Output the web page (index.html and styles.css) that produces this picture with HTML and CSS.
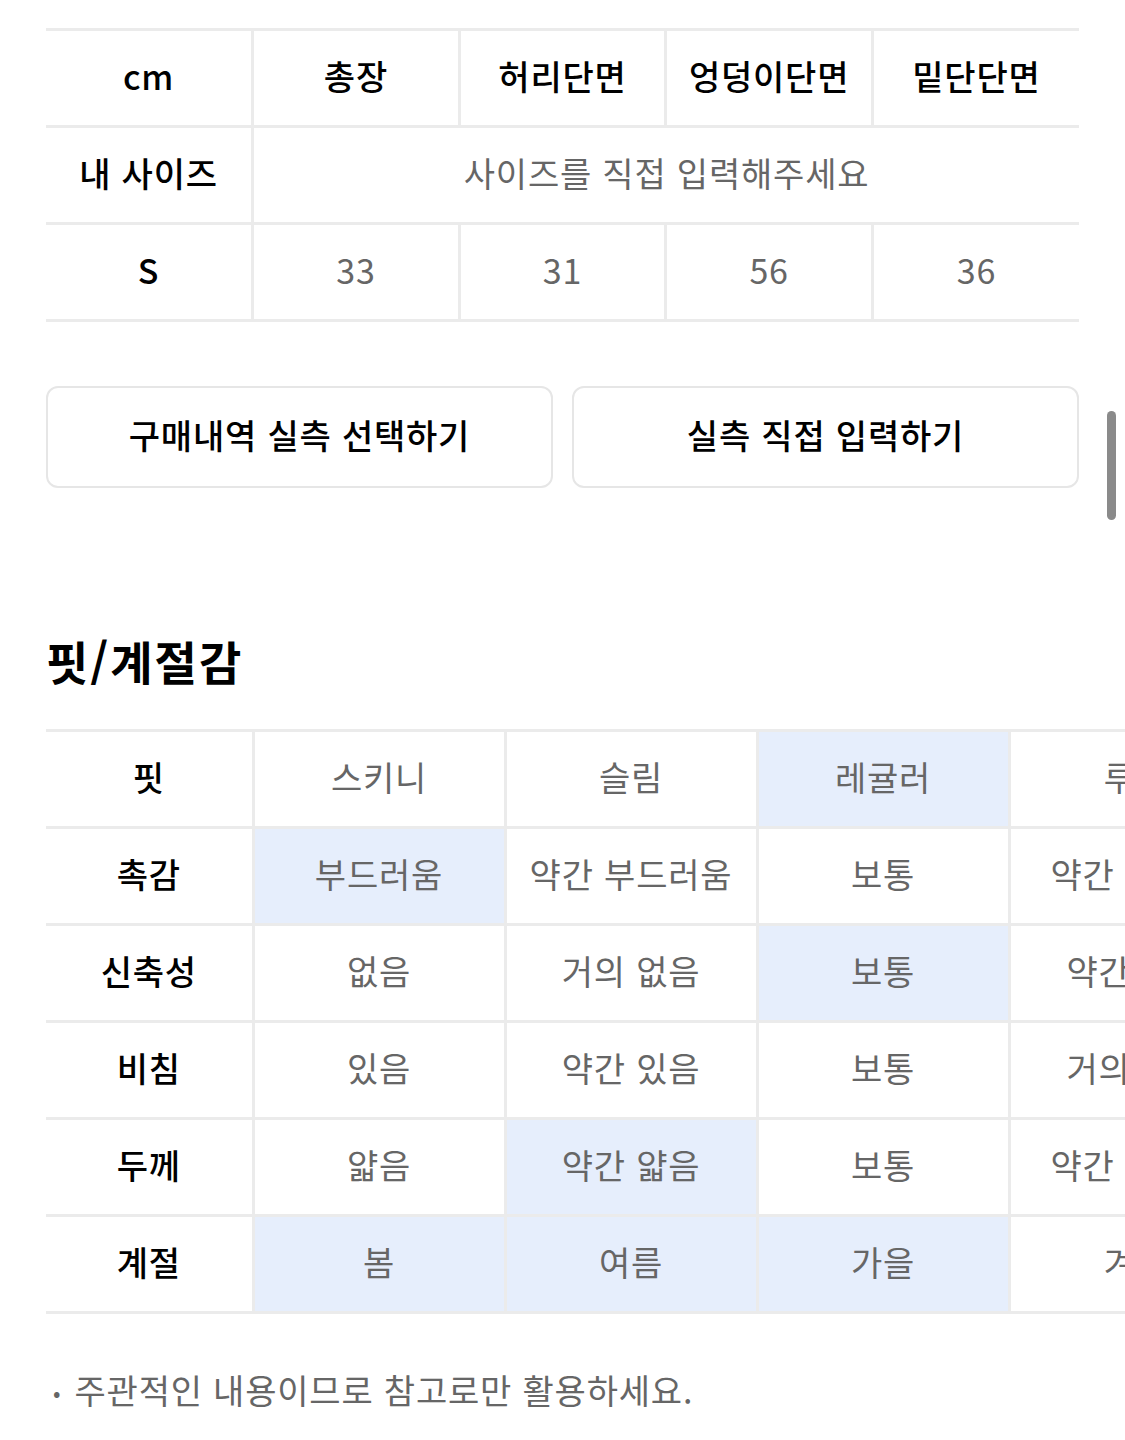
FILE: index.html
```html
<!DOCTYPE html>
<html lang="ko">
<head>
<meta charset="utf-8">
<title>사이즈 / 핏</title>
<link rel="stylesheet" href="styles.css">
</head>
<body>
<div class="page">
  <table class="size-table">
    <tr>
      <th>cm</th>
      <th>총장</th>
      <th>허리단면</th>
      <th>엉덩이단면</th>
      <th>밑단단면</th>
    </tr>
    <tr>
      <th>내 사이즈</th>
      <td colspan="4" class="placeholder">사이즈를 직접 입력해주세요</td>
    </tr>
    <tr>
      <th>S</th>
      <td>33</td>
      <td>31</td>
      <td>56</td>
      <td>36</td>
    </tr>
  </table>

  <div class="buttons">
    <button class="btn">구매내역 실측 선택하기</button>
    <button class="btn">실측 직접 입력하기</button>
  </div>

  <h2 class="section-title">핏/계절감</h2>

  <div class="fit-wrap">
    <table class="fit-table">
      <colgroup>
        <col class="c-label"><col class="c-val"><col class="c-val"><col class="c-val"><col class="c-val">
      </colgroup>
      <tr>
        <th>핏</th>
        <td>스키니</td>
        <td>슬림</td>
        <td class="on">레귤러</td>
        <td>루즈</td>
      </tr>
      <tr>
        <th>촉감</th>
        <td class="on">부드러움</td>
        <td>약간 부드러움</td>
        <td>보통</td>
        <td>약간 거칠음</td>
      </tr>
      <tr>
        <th>신축성</th>
        <td>없음</td>
        <td>거의 없음</td>
        <td class="on">보통</td>
        <td>약간 있음</td>
      </tr>
      <tr>
        <th>비침</th>
        <td>있음</td>
        <td>약간 있음</td>
        <td>보통</td>
        <td>거의 없음</td>
      </tr>
      <tr>
        <th>두께</th>
        <td>얇음</td>
        <td class="on">약간 얇음</td>
        <td>보통</td>
        <td>약간 두꺼움</td>
      </tr>
      <tr>
        <th>계절</th>
        <td class="on">봄</td>
        <td class="on">여름</td>
        <td class="on">가을</td>
        <td>겨울</td>
      </tr>
    </table>
  </div>

  <p class="note"><span class="dot">•</span>주관적인 내용이므로 참고로만 활용하세요.</p>
</div>
<div class="scrollbar"></div>
</body>
</html>
```

FILE: styles.css
```css
html, body {
  margin: 0;
  padding: 0;
  background: #fff;
  overflow: hidden;
}

body {
  font-family: "Noto Sans CJK KR", "Noto Sans", sans-serif;
  color: #000;
}

.page {
  padding: 28px 0 0 46px;
}

table {
  border-collapse: collapse;
  table-layout: fixed;
}

.size-table {
  width: 1033px;
  border-top: 3px solid #ebebeb;
}

.size-table th,
.size-table td,
.fit-table th,
.fit-table td {
  height: 89px;
  padding: 0 0 5px;
  text-align: center;
  vertical-align: middle;
  border-bottom: 3px solid #ebebeb;
  border-left: 3px solid #ebebeb;
  font-size: 34px;
  letter-spacing: 0.8px;
  line-height: 42px;
  white-space: nowrap;
}

.size-table th:first-child,
.fit-table th:first-child {
  border-left: none;
  font-weight: 500;
  color: #000;
}

.size-table tr:first-child th {
  font-weight: 500;
  color: #000;
}

.size-table td,
.fit-table td {
  color: #666;
  font-weight: 400;
}

.buttons {
  display: flex;
  gap: 19px;
  width: 1033px;
  margin-top: 64px;
}

.btn {
  flex: 1;
  height: 102px;
  background: #fff;
  border: 2px solid #e6e6e6;
  border-radius: 12px;
  font-family: inherit;
  font-size: 34px;
  letter-spacing: 0.8px;
  font-weight: 500;
  color: #000;
  padding: 0 0 5px;
}

.section-title {
  margin: 142px 0 0;
  font-size: 46px;
  line-height: 60px;
  font-weight: 700;
  letter-spacing: 2px;
  color: #000;
}

.fit-wrap {
  margin-top: 39px;
  width: 1079px;
  overflow: hidden;
}

.fit-table {
  width: 1215px;
  border-top: 3px solid #ebebeb;
}

.c-label {
  width: 207px;
}

.c-val {
  width: 252px;
}

.fit-table td.on {
  background: #e6eefc;
}

.note {
  margin: 54px 0 0 7px;
  font-size: 34px;
  letter-spacing: 0.8px;
  line-height: 44px;
  color: #666;
}

.dot {
  display: inline-block;
  font-size: 22px;
  vertical-align: 3px;
  margin-right: 14px;
  letter-spacing: 0;
}

.scrollbar {
  position: fixed;
  top: 411px;
  right: 9px;
  width: 9px;
  height: 109px;
  border-radius: 5px;
  background: #8a8a8a;
}
```
